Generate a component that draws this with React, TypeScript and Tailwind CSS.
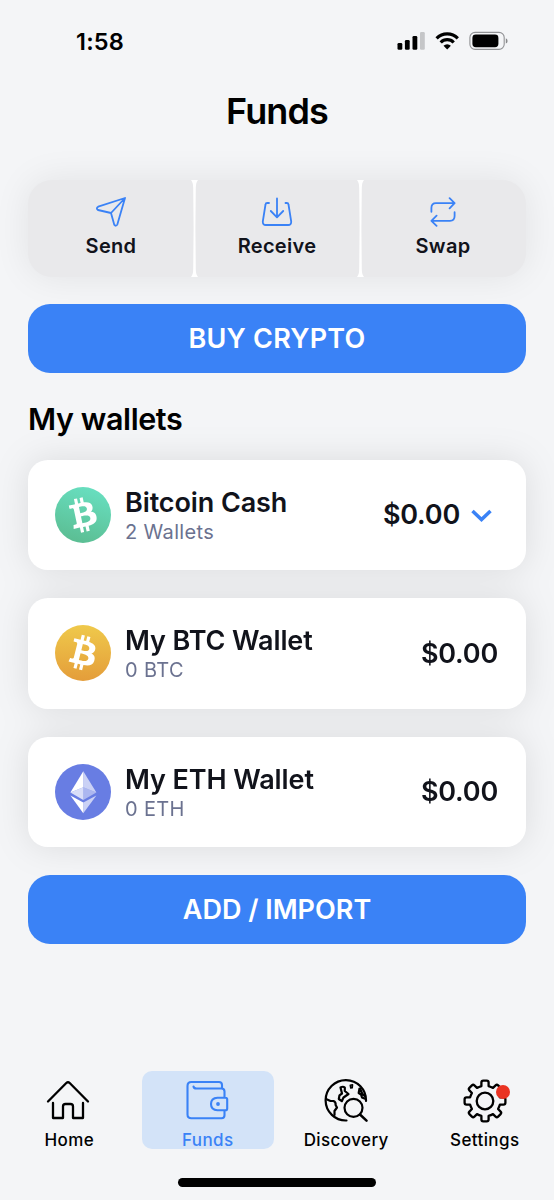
import type { ReactNode } from "react";

const line = {
  fill: "none",
  stroke: "currentColor",
  strokeLinecap: "round" as const,
  strokeLinejoin: "round" as const,
};

function SendIcon() {
  return (
    <svg width="30" height="30" viewBox="0 0 30 30" {...line} strokeWidth="1.8">
      <path d="M29 1 2.2 9.7Q-.3 11.3 2 13L15 16 29 1 21.4 27.3Q20 30 18.2 27.6L15 16" />
    </svg>
  );
}

function ReceiveIcon() {
  return (
    <svg width="32" height="30" viewBox="0 0 32 30" {...line} strokeWidth="1.8">
      <path d="M8 6H6.2Q4.7 6 4.5 7.5L1.8 24.5Q1.6 28 4.8 28H27.2Q30.4 28 30.2 24.5L27.5 7.5Q27.3 6 25.8 6H24.5M16 1.5V20M9.8 14 16 20.3 22.2 14" />
    </svg>
  );
}

function SwapIcon() {
  return (
    <svg width="26" height="30" viewBox="0 0 26 30" {...line} strokeWidth="1.8">
      <path d="M1.4 14.8V11Q1.4 6.2 6 6.2H24.2M19.6 1.2 24.6 6.2 19.6 11.4M24.6 15.2V19Q24.6 23.8 20 23.8H1.8M6.6 18.6 1.4 23.8 6.6 28.8" />
    </svg>
  );
}

function Divider() {
  return (
    <svg className="-mx-[3.5px] shrink-0" width="7" height="97" viewBox="0 0 7 97" fill="white">
      <path d="M0 0H7Q4.8 2.5 4.8 8L4.4 48.5 4.8 89Q4.8 94.5 7 97H0Q2.2 94.5 2.2 89L2.6 48.5 2.2 8Q2.2 2.5 0 0Z" />
    </svg>
  );
}

const bitcoinPath =
  "M17.288 10.291c.24-1.59-.974-2.45-2.64-3.03l.54-2.153-1.315-.33-.525 2.107c-.345-.087-.705-.167-1.064-.25l.526-2.127-1.32-.33-.54 2.165c-.285-.067-.565-.132-.84-.2l-1.815-.45-.35 1.407s.975.225.955.236c.535.136.63.486.615.766l-1.477 5.92c-.075.166-.24.406-.614.314.015.02-.96-.24-.96-.24l-.66 1.51 1.71.426.93.242-.54 2.19 1.32.327.54-2.17c.36.1.705.19 1.05.273l-.51 2.154 1.32.33.545-2.19c2.24.427 3.93.257 4.64-1.774.57-1.637-.03-2.58-1.217-3.196.854-.193 1.5-.76 1.68-1.93h.01zm-3.01 4.22c-.404 1.64-3.157.75-4.05.53l.72-2.9c.896.23 3.757.67 3.33 2.37zm.41-4.24c-.37 1.49-2.662.735-3.405.55l.654-2.64c.744.18 3.137.524 2.75 2.084v.006z";

function BchLogo() {
  return (
    <svg width="56" height="56" viewBox="0 0 24 24">
      <defs>
        <linearGradient id="bch" x1="0.65" y1="0" x2="0.35" y2="1">
          <stop stopColor="#68dfc0" />
          <stop offset="1" stopColor="#5bbd92" />
        </linearGradient>
      </defs>
      <circle cx="12" cy="12" r="12" fill="url(#bch)" />
      <path d={bitcoinPath} fill="white" fillRule="evenodd" transform="rotate(-26 12 12)" />
    </svg>
  );
}

function BtcLogo() {
  return (
    <svg width="56" height="56" viewBox="0 0 24 24">
      <defs>
        <linearGradient id="btc" x1="0" y1="0" x2="0" y2="1">
          <stop stopColor="#efc94b" />
          <stop offset="1" stopColor="#e49d3a" />
        </linearGradient>
      </defs>
      <circle cx="12" cy="12" r="12" fill="url(#btc)" />
      <path d={bitcoinPath} fill="white" fillRule="evenodd" />
    </svg>
  );
}

function EthLogo() {
  return (
    <svg width="56" height="56" viewBox="0 0 56 56">
      <circle cx="28" cy="28" r="28" fill="#687de3" />
      <g fill="white">
        <path d="M28.3 7.3V23.2L15.4 28.6Z" />
        <path d="M28.3 7.3V23.2L41.4 28.6Z" opacity=".65" />
        <path d="M15.4 28.6 28.3 23.2V36Z" opacity=".75" />
        <path d="M41.4 28.6 28.3 23.2V36Z" opacity=".45" />
        <path d="M15.4 31.5 28.3 38.6V49.2Z" />
        <path d="M41.4 31.5 28.3 38.6V49.2Z" opacity=".65" />
      </g>
    </svg>
  );
}

function HomeIcon() {
  return (
    <svg className="-ml-[2px]" width="44" height="44" viewBox="0 0 44 44" {...line} strokeWidth="2.3">
      <path d="M2 22.5 20.3 4Q22 2.4 23.7 4L42 22.5M7 24V39H17V27.5Q17 25 19.5 25H24.5Q27 25 27 27.5V39H37V24" />
    </svg>
  );
}

function WalletIcon() {
  return (
    <svg className="-ml-[2px]" width="44" height="44" viewBox="0 0 44 44" {...line} strokeWidth="2.1">
      <path d="M37 9V6Q37 3 34 3H6.3Q2.5 3 2.5 7V35.5Q2.5 39.2 6.3 39.2H36.5Q39.5 39.2 39.5 36.2V31.5M8.5 7.5Q8.800 9.5 11.5 9.5H36.5Q39.5 9.5 39.5 12.5V18.5M42.2 20.5Q42.2 18.7 40.4 18.7H32.5Q26 19 26 25T32.5 31.3H40.4Q42.2 31.3 42.2 29.5Z" />
      <circle cx="33" cy="25" r="1.9" fill="currentColor" stroke="none" />
    </svg>
  );
}

function DiscoveryIcon() {
  return (
    <svg width="44" height="44" viewBox="0 0 44 44" {...line} strokeWidth="2.2">
      <path d="M22.5 41.500A20.200 20.200 0 1 1 42 22" />
      <path d="M2 20 6.5 22H9.5Q12 23 11.6 26L13 28.5 10.5 32V36" />
      <path d="M16.5 8.5Q19 7 20.8 8.5V12L24.5 15 19.5 18.5 17.8 22.2 14.8 20 15.5 16.3 18 14.5Z" />
      <path d="M26.3 6.3 28.5 5.800 28.2 8.8 26.8 9Z" strokeWidth="1.6" />
      <path d="M35.5 9.5 34.7 14 37 15.5 38 18.5 40.5 19.5M36.3 9.8 38.3 15 41 17" />
      <circle cx="29.5" cy="28.8" r="9" />
      <path d="M36 35.5 42.5 41.7" strokeWidth="2.5" />
    </svg>
  );
}

function SettingsIcon() {
  return (
    <svg width="44" height="44" viewBox="-22 -22 44 44" {...line} strokeWidth="2.3">
      <circle r="8.3" />
      <path d="M-3.600-14.900V-18.500Q-3.600-20.400-1.700-20.400H1.700Q3.600-20.400 3.600-18.500V-14.900Q6-14.100 8-13.100L10.600-15.600Q11.900-16.800 13.100-15.600L15.600-13.100Q16.800-11.900 15.600-10.600L13.100-8Q14.100-6 14.900-3.600H18.500Q20.400-3.600 20.400-1.700V1.700Q20.400 3.600 18.500 3.600H14.900Q14.100 6 13.100 8L15.600 10.600Q16.800 11.900 15.600 13.100L13.100 15.600Q11.900 16.800 10.600 15.600L8 13.100Q6 14.100 3.600 14.900V18.500Q3.600 20.400 1.700 20.400H-1.700Q-3.600 20.400-3.600 18.500V14.900Q-6 14.100-8 13.100L-10.600 15.600Q-11.900 16.800-13.100 15.600L-15.600 13.100Q-16.800 11.900-15.600 10.600L-13.100 8Q-14.100 6-14.900 3.600H-18.500Q-20.400 3.600-20.400 1.700V-1.700Q-20.400-3.600-18.500-3.600H-14.900Q-14.100-6-13.100-8L-15.600-10.600Q-16.800-11.900-15.600-13.100L-13.100-15.600Q-11.900-16.800-10.600-15.600L-8-13.100Q-6-14.100-3.600-14.900Z" />
    </svg>
  );
}

function StatusIcons() {
  return (
    <svg width="112" height="20" viewBox="0 0 112 20">
      <rect x=".5" y="12" width="4.8" height="6.800" rx="1.3" />
      <rect x="7.9" y="9" width="4.8" height="9.8" rx="1.3" />
      <rect x="15.500" y="5" width="4.800" height="13.8" rx="1.3" />
      <rect x="23" y="1" width="4.800" height="17.8" rx="1.3" fill="#c5c6c8" />
      <g transform="translate(2.200 0)">
        <g fill="none" stroke="black" strokeWidth="3.2">
          <path d="M37.4 7.300A14.8 14.8 0 0 1 58.6 7.300" />
          <path d="M41.5 11.500A9 9 0 0 1 54.5 11.500" />
        </g>
        <path d="M48 18.500 44.3 14.8A5.200 5.200 0 0 1 51.7 14.8Z" />
      </g>
      <g transform="translate(3.200 .2)">
        <rect x="69.7" y="1.200" width="34.300" height="17" rx="5.2" fill="none" stroke="#919295" strokeWidth="1.1" />
        <rect x="72.200" y="3.400" width="26" height="12.600" rx="3.400" />
        <path d="M105.600 7V12.400Q107.400 11.700 107.400 9.700T105.600 7Z" fill="#88898b" />
      </g>
    </svg>
  );
}

function Action({ icon, label }: { icon: ReactNode; label: string }) {
  return (
    <button className="flex w-[166px] flex-col items-center pt-[17px] text-[#3a82f6]">
      {icon}
      <span className="mt-[5px] text-[20px] leading-7 font-semibold tracking-[0.3px] text-[#11131b]">{label}</span>
    </button>
  );
}

function WalletCard({ logo, name, detail, children }: { logo: ReactNode; name: string; detail: string; children?: ReactNode }) {
  return (
    <div className="flex h-[110.5px] items-center rounded-[20px] bg-white pr-[28px] pl-[27px] text-[#11131b]">
      {logo}
      <div className="ml-[14px] flex-1 pt-[2px]">
        <div className="text-[27px] leading-8 font-[560] tracking-[-0.1px]">{name}</div>
        <div className="text-[20px] leading-[26px] tracking-[0.35px] text-[#6b7290]">{detail}</div>
      </div>
      <div className="pt-[1px] text-[27px] font-[560] tracking-[-0.2px]">$0.00</div>
      {children}
    </div>
  );
}

function Tab({ icon, label, active = false }: { icon: ReactNode; label: string; active?: boolean }) {
  return (
    <div
      className={
        active
          ? "flex h-[78px] w-[131.5px] flex-col items-center rounded-[10px] bg-[#d3e3f8] pt-2 text-[#3a82f6]"
          : "flex h-[78px] w-[131.5px] flex-col items-center pt-2 text-black"
      }
    >
      <div className="relative h-11">{icon}</div>
      <span className="mt-[7px] text-[17px] leading-5 font-medium tracking-[0.4px]">{label}</span>
    </div>
  );
}

export default function App() {
  return (
    <main className="flex h-[1200px] w-[554px] flex-col overflow-hidden bg-[#f4f5f7] font-['Inter',sans-serif] text-black">
      <header className="flex h-[82px] shrink-0 items-center justify-between pr-[45px] pl-[76px]">
        <span className="pt-[1px] text-[23.5px] font-semibold tracking-[0.2px]">1:58</span>
        <StatusIcons />
      </header>
      <h1 className="h-[98px] shrink-0 pt-[7px] text-center text-[36px] leading-[44px] font-semibold tracking-[-0.9px]">Funds</h1>

      <section className="mx-[28px] flex h-[96.5px] shrink-0 rounded-[24px] bg-[#e9e9eb] shadow-[0_0_36px_rgba(0,0,0,0.08)]">
        <Action icon={<SendIcon />} label="Send" />
        <Divider />
        <Action icon={<ReceiveIcon />} label="Receive" />
        <Divider />
        <Action icon={<SwapIcon />} label="Swap" />
      </section>

      <button className="mx-[28px] mt-[27.5px] h-[69px] shrink-0 rounded-[22px] bg-[#3a82f6] pt-[2px] text-[27px] font-semibold tracking-[0.2px] text-white">
        BUY CRYPTO
      </button>

      <h2 className="mx-[28px] mt-[26px] h-[60.5px] shrink-0 text-[30.5px] leading-10 font-[560] tracking-[-0.4px]">My wallets</h2>

      <section className="mx-[28px] flex shrink-0 flex-col gap-[28px] drop-shadow-[0_0_17px_rgba(0,0,0,0.10)]">
        <WalletCard logo={<BchLogo />} name="Bitcoin Cash" detail="2 Wallets">
          <svg className="mt-[2px] mr-[6px] ml-[11px]" width="21" height="14" viewBox="0 0 21 14" fill="none" stroke="#3a82f6" strokeWidth="3.5">
            <path d="M1.5 2 10.5 10.6 19.5 2" />
          </svg>
        </WalletCard>
        <WalletCard logo={<BtcLogo />} name="My BTC Wallet" detail="0 BTC" />
        <WalletCard logo={<EthLogo />} name="My ETH Wallet" detail="0 ETH" />
      </section>

      <button className="mx-[28px] mt-[28px] h-[69px] shrink-0 rounded-[22px] bg-[#3a82f6] pt-[2px] text-[27px] font-semibold text-white">
        ADD / IMPORT
      </button>

      <nav className="mt-[127px] flex shrink-0 justify-around">
        <Tab icon={<HomeIcon />} label="Home" />
        <Tab icon={<WalletIcon />} label="Funds" active />
        <Tab icon={<DiscoveryIcon />} label="Discovery" />
        <Tab
          icon={
            <>
              <SettingsIcon />
              <span className="absolute top-[6px] -right-[3px] size-[14px] rounded-full bg-[#ea3323]" />
            </>
          }
          label="Settings"
        />
      </nav>
      <div className="mx-auto mt-[28.5px] h-[9px] w-[198px] shrink-0 rounded-full bg-black" />
    </main>
  );
}
